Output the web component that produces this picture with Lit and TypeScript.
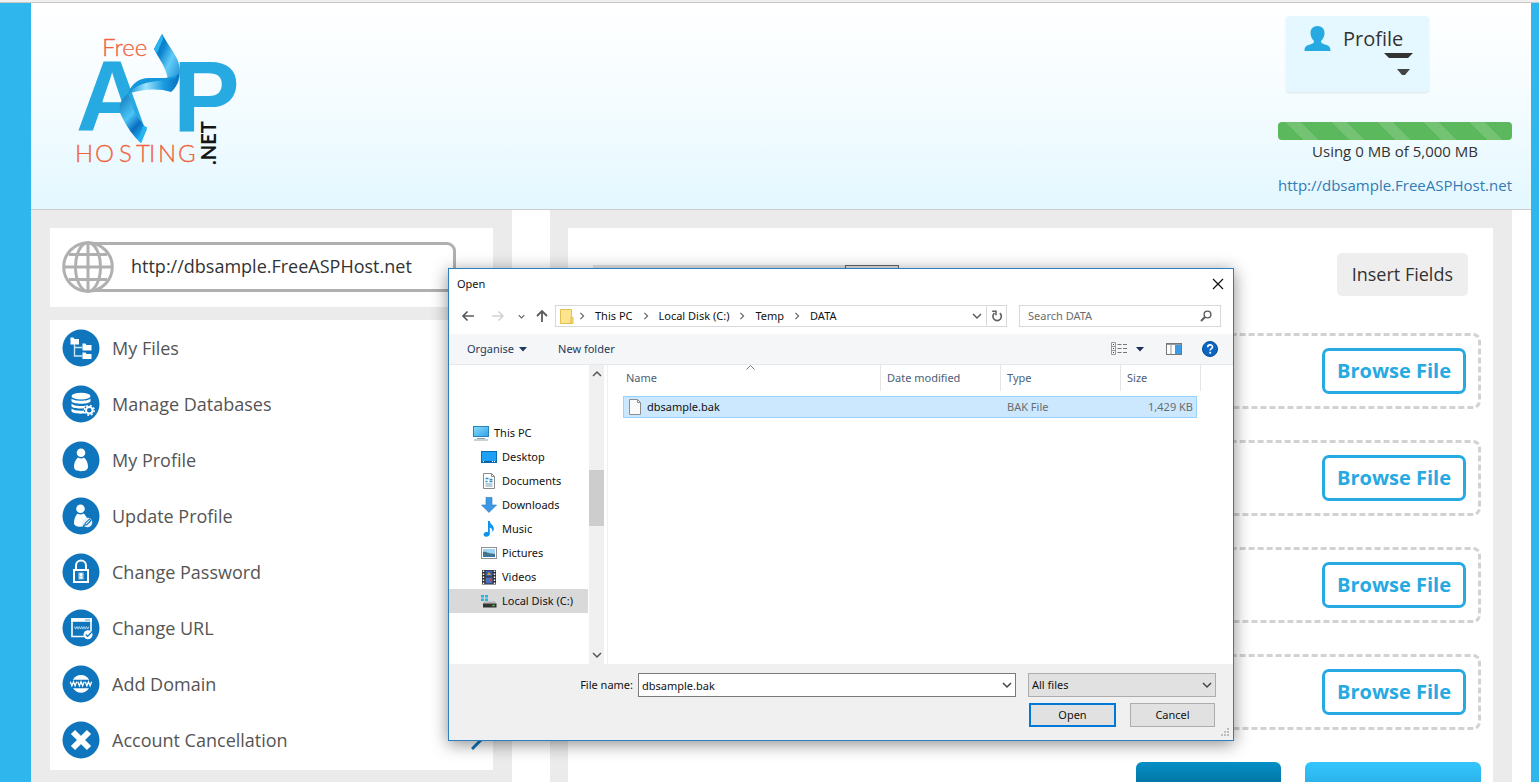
import { LitElement, html, svg, css } from "lit";
import { customElement, state } from "lit/decorators.js";
import { classMap } from "lit/directives/class-map.js";

const disc = (inner: unknown) => html`
  <svg class="disc" viewBox="0 0 38 38" aria-hidden="true">
    <circle cx="19" cy="19" r="18.5" fill="#0f75bc" />
    ${inner}
  </svg>`;

const icons: Record<string, unknown> = {
  files: svg`
    <path d="M8.5 8.5h3l1 1.500h4.500v5.500h-8.500z" fill="#fff"/>
    <path d="M20.500 14.500h3l1 1.500h5v5.500h-9zM20.500 23.500h3l1 1.500h5v5h-9z" fill="#fff"/>
    <path d="M12.500 15v12h8M12.500 18.500h8" fill="none" stroke="#cfe6f6" stroke-width="1.400"/>`,
  database: svg`
    <ellipse cx="19" cy="11.200" rx="9.500" ry="3.400" fill="#fff"/>
    <path d="M9.500 13.500c2 3 17 3 19 0v3c-2 3-17 3-19 0zM9.500 18.500c2 3 13 3.200 17 1.200-2 .6-4 2-4.300 3.500-5 .6-11.500 0-12.700-1.700zM9.500 23.500c2 2 8 2.500 12.300 2 .2 1.300.6 2 1.200 2.800-5 .8-12 .2-13.500-1.800z" fill="#fff"/>
    <circle cx="27.300" cy="25.300" r="3.300" fill="none" stroke="#fff" stroke-width="2"/>
    <circle cx="27.300" cy="25.300" r="4.800" fill="none" stroke="#fff" stroke-width="1.600" stroke-dasharray="1.900 1.870"/>`,
  person: svg`
    <circle cx="19" cy="11.800" r="4.300" fill="#fff"/>
    <path d="M16 16.500c1.500 1.300 4.500 1.300 6 0 2.500 2 4 5.500 4 9 0 3-2 4.700-7 4.700s-7-1.700-7-4.700c0-3.500 1.500-7 4-9z" fill="#fff"/>`,
  edit: svg`
    <circle cx="18.500" cy="11.800" r="4.300" fill="#fff"/>
    <path d="M15.500 16.500c1.500 1.300 4.500 1.300 6 0 1.700 1 2.800 3 3.500 5-2.500.5-4.700 3-4 8.100-5 .6-9-.4-9-3.600 0-4 1.500-7.500 3.500-9.500z" fill="#fff"/>
    <circle cx="25.500" cy="25.500" r="4.800" fill="#e6f2fa"/>
    <path d="M22.700 28.200l.5-2 4.200-4 1.500 1.500-4.200 4z" fill="none" stroke="#0f75bc" stroke-width="1.100"/>`,
  lock: svg`
    <path d="M14 17v-4.500a5 5 0 0 1 10 0V17" fill="none" stroke="#fff" stroke-width="2"/>
    <rect x="12" y="17" width="14" height="12" fill="none" stroke="#fff" stroke-width="2"/>
    <rect x="16.300" y="19.500" width="5.400" height="7" fill="#8fc1e3"/>
    <circle cx="19" cy="21.500" r="1.500" fill="#fff"/><rect x="17.500" y="23.500" width="3" height="2" fill="#fff"/>`,
  url: svg`
    <path d="M29 22V10H10v17.500h12" fill="none" stroke="#fff" stroke-width="1.600"/>
    <path d="M9.200 9.200h20.600v3.600H9.200z" fill="#fff"/><path d="M23 11h5" stroke="#6fb0dd" stroke-width="1.200"/>
    <path d="M12.500 17.500l1.200 2.600 1.200-2.600 1.200 2.600 1.200-2.600M17.300 17.500l1.200 2.600 1.200-2.600 1.200 2.600 1.200-2.600M22.100 17.500l1.200 2.600 1.200-2.600 1.200 2.600 1.200-2.600" fill="none" stroke="#b9daf0" stroke-width=".9"/>
    <circle cx="26" cy="25.800" r="4.500" fill="#fff"/><path d="M23.800 25.500l1.800 1.900 4-4.200" fill="none" stroke="#0f75bc" stroke-width="1.300"/>`,
  domain: svg`
    <path d="M10.800 14.800a9.400 9.400 0 0 1 16.400 0zM11 23.300a9.400 9.400 0 0 0 16 0z" fill="#fff"/>
    <path d="M8.300 16.800l1.600 4 1.600-4 1.600 4 1.600-4M15.800 16.800l1.600 4 1.600-4 1.600 4 1.600-4M23.300 16.800l1.600 4 1.600-4 1.600 4 1.600-4" fill="none" stroke="#fff" stroke-width="1.300"/>`,
  cancel: svg`
    <path d="M11 11l16 16M27 11L11 27" stroke="#fff" stroke-width="6"/>`,
};

const menu = [
  ["files", "My Files"],
  ["database", "Manage Databases"],
  ["person", "My Profile"],
  ["edit", "Update Profile"],
  ["lock", "Change Password"],
  ["url", "Change URL"],
  ["domain", "Add Domain"],
  ["cancel", "Account Cancellation"],
];

const treeIcons: Record<string, unknown> = {
  pc: svg`<defs><linearGradient id="g" x1="0" y1="0" x2="1" y2="1"><stop offset="0" stop-color="#8bdcfb"/><stop offset="1" stop-color="#2fa2ea"/></linearGradient></defs>
    <rect x=".5" y="1.500" width="15" height="10" fill="url(#g)" stroke="#2a83b8"/><path d="M4 13.500h8M1 15h14" stroke="#8aa4b3"/>`,
  desktop: svg`<rect x=".5" y="2.500" width="15" height="11" fill="#1da1f7" stroke="#0a6cb5"/><path d="M1 12.500h14" stroke="#0a5a9c"/><path d="M2 12.500h1M11 12.500h1M13 12.500h1" stroke="#fff"/>`,
  documents: svg`<path d="M2.500.5h8l3 3v12h-11z" fill="#fff" stroke="#8a8a8a"/><path d="M10.500.5v3h3" fill="none" stroke="#8a8a8a"/><path d="M4.500 5.500h3M4.500 8.500h2M8.500 6.500h3M8.500 8.500h3" stroke="#2b90cf" stroke-width="1.500"/><path d="M4.500 11h7M4.500 13h7" stroke="#7b9db5"/>`,
  downloads: svg`<path d="M5 .5h6v7.500h4.500L8 15.500.5 8H5z" fill="#3d97e3" stroke="#2a7cc4" stroke-width=".6"/>`,
  music: svg`<path d="M7 0h1.800c.4 3.500 4.400 4.500 4 8-.1 1.300-.8 2.500-1.500 3 .6-2.800-1-4-2.500-4.500v6.200C8.800 15 6.500 16 4.800 15.700 2.600 15.300 2 13.500 3 12.200 4 11 5.800 10.800 7 11.300z" fill="#0d94ec"/>`,
  pictures: svg`<rect x=".5" y="2.500" width="15" height="11" fill="#fff" stroke="#909090"/><rect x="2" y="4" width="12" height="8" fill="#9fd3f2"/><path d="M2 7c3-1 5 2 12 2v3H2z" fill="#44748a"/><path d="M2 11h12v1H2z" fill="#2f77b5"/>`,
  videos: svg`<rect x="1" y="1" width="14" height="14.500" fill="#2c2c2c"/><path d="M2.500 1.500v14M13.500 1.500v14" stroke="#fff" stroke-width="1.500" stroke-dasharray="1.500 1.500"/><rect x="4.500" y="1.500" width="7" height="6" fill="#3b5fb0"/><rect x="4.500" y="8.500" width="7" height="6" fill="#4c6fc4"/><path d="M6 6l2-3 2 3z" fill="#e0a020"/><path d="M8 12l2-3 1 3z" fill="#d04a3a"/>`,
  disk: svg`<path d="M0 2h3v2.500H0zM4 2h3v2.500H4zM0 5.500h3V8H0zM4 5.500h3V8H4z" fill="#20b6e2"/><path d="M3.500 8.500h10.500l1.500 2H2z" fill="#b5b5b5"/><rect x="2" y="10.500" width="13.500" height="4" fill="#333"/><rect x="11.500" y="11.800" width="2" height="1.400" fill="#55e055"/>`,
};

const places = [
  ["pc", "This PC"],
  ["desktop", "Desktop"],
  ["documents", "Documents"],
  ["downloads", "Downloads"],
  ["music", "Music"],
  ["pictures", "Pictures"],
  ["videos", "Videos"],
  ["disk", "Local Disk (C:)"],
];

const chevron = (cls: string) => html`
  <svg class=${"chev " + cls} viewBox="0 0 10 10" aria-hidden="true"><path d="M1 3l4 4 4-4" fill="none" stroke="currentColor" stroke-width="1.500" /></svg>`;

@customElement("site-logo")
class SiteLogo extends LitElement {
  static styles = css`
    :host { display: block; width: 170px; height: 140px; }
    .art { display: block; width: 100%; height: 100%; }
    .big { font: 700 100px "Liberation Sans", Arial, sans-serif; fill: #27a9e1; }
    .thin { font: 300 24px Lato, sans-serif; fill: #f1633c; stroke: #f1633c; stroke-width: 0.3px; }
    .net { font: 700 20px Lato, sans-serif; fill: #151515; }
  `;
  render() {
    return html`
      <svg class="art" viewBox="70 30 170 140" role="img" aria-label="Free ASP Hosting .NET">
        <defs>
          <linearGradient id="r1" x1="0" y1="0" x2="1" y2="1">
            <stop offset="0" stop-color="#0a72c0" /><stop offset=".3" stop-color="#0b84d0" />
            <stop offset=".55" stop-color="#63cdf8" /><stop offset="1" stop-color="#0a78c6" />
          </linearGradient>
          <linearGradient id="r2" x1="0" y1="0" x2="1" y2="0">
            <stop offset="0" stop-color="#1191d8" /><stop offset=".35" stop-color="#9be4fd" />
            <stop offset=".7" stop-color="#1b9ce0" /><stop offset="1" stop-color="#0870bd" />
          </linearGradient>
          <linearGradient id="r3" x1="0" y1="0" x2=".6" y2="1">
            <stop offset="0" stop-color="#0d74ba" /><stop offset=".5" stop-color="#4cc5f6" />
            <stop offset=".75" stop-color="#0a6dbf" /><stop offset="1" stop-color="#1fb0ee" />
          </linearGradient>
        </defs>
        <text class="thin" x="102" y="56">Free</text>
        <text class="big" x="76" y="131">A</text>
        <text class="big" x="173" y="131">P</text>
        <path d="M162 34l-8 15c5 10 11 16 14 30l3 12c6-4 9-11 9-20 0-11-7-19-12-27z" fill="url(#r1)" />
        <path d="M162 34l-8 15 3 4 6-14z" fill="#2cb4ee" />
        <path d="M128 94c4-12 13-17 24-16 10 0 19 1 27-4-1 8-3 14-8 18-12-4-30-3-43 2z" fill="url(#r2)" />
        <path d="M128 94c4-12 13-17 24-16 10 0 17 1 25-3l-1 3c-16 5-34 0-48 16z" fill="#1497dc" />
        <path d="M128 94c-8 6-11 14-6 23 5 10 11 19 19 26l6-14c-7-8-15-17-15-27z" fill="url(#r3)" />
        <path d="M147 127l-6 16-3-3 5-14z" fill="#28b4ef" />
        <text class="thin" y="162" x="75 95 119 136 149 158 178">HOSTING</text>
        <text class="net" transform="translate(216 165) rotate(-90)">.NET</text>
      </svg>`;
  }
}

@customElement("open-dialog")
class OpenDialog extends LitElement {
  @state() private place = "disk";

  static styles = css`
    :host {
      display: block;
      box-sizing: border-box;
      width: 786px;
      border: 1px solid #2a7fc0;
      background: #fff;
      box-shadow: 0 3px 16px rgba(0, 0, 0, 0.45);
      font: 11px/16px "Noto Sans", "Open Sans", sans-serif;
      color: #111;
    }
    * { box-sizing: border-box; }
    button, input, select { font: inherit; color: inherit; margin: 0; padding: 0; border: 0; background: none; border-radius: 0; outline: none; appearance: none; }
    svg { display: block; flex: none; }
    .title { display: flex; align-items: center; justify-content: space-between; height: 29px; padding: 0 9px 0 8px; }
    .close { width: 12px; height: 12px; }
    .nav { display: flex; align-items: center; height: 36px; padding: 0 12px 0 12px; color: #5c5c5c; }
    .arrows { display: flex; align-items: center; width: 94px; gap: 16px; }
    .arrow { width: 14px; height: 14px; }
    .recent { display: flex; align-items: center; gap: 10px; margin-left: -3px; }
    .faint { color: #d2d2d2; }
    .chev { width: 10px; height: 10px; }
    .small { width: 7px; height: 7px; }
    .side { transform: rotate(-90deg); width: 8px; height: 8px; color: #666; }
    .address { flex: 1; display: flex; align-items: center; height: 22px; border: 1px solid #d9d9d9; padding-left: 4px; }
    .crumbs { flex: 1; display: flex; align-items: center; gap: 9px; color: #111; padding-left: 4px; }
    .reload { display: grid; place-items: center; align-self: stretch; width: 20px; border-left: 1px solid #d9d9d9; margin-left: 4px; }
    .search { display: flex; align-items: center; width: 202px; height: 22px; border: 1px solid #d9d9d9; margin-left: 12px; padding: 0 8px; }
    .search-input { flex: 1; min-width: 0; }
    .search-input::placeholder { color: #6d6d6d; opacity: 1; }
    .tools { display: flex; align-items: center; height: 31px; background: #f5f6f7; border-bottom: 1px solid #e8e8e8; padding: 0 15px 0 18px; color: #1e395b; }
    .organise { display: flex; align-items: center; gap: 5px; margin-right: 31px; }
    .tail { margin-left: auto; display: flex; align-items: center; }
    .views { display: flex; align-items: center; gap: 8px; margin-right: 22px; }
    .preview { margin-right: 20px; }
    .body { display: flex; height: 299px; }
    .tree { width: 140px; padding-top: 56px; display: flex; flex-direction: column; }
    .node { display: flex; align-items: center; height: 24px; gap: 5px; padding-left: 32px; text-align: left; }
    .root { padding-left: 24px; }
    .chosen { background: #d9d9d9; margin-right: 1px; }
    .bar { width: 16px; background: #f0f0f0; display: flex; flex-direction: column; align-items: center; padding: 4px 0; color: #555; border-right: 1px solid #fff; }
    .thumb { width: 15px; height: 56px; background: #cdcdcd; margin: 91px 0 auto; }
    .up { transform: rotate(180deg); }
    .list { flex: 1; border-left: 1px solid #f0f0f0; margin-left: 2px; padding-left: 15px; }
    .grid { border-collapse: separate; border-spacing: 0; table-layout: fixed; width: 578px; }
    .grid th { font-weight: 400; text-align: left; color: #4c607a; height: 26px; border-right: 1px solid #e5e5e5; padding: 0 6px; position: relative; }
    .grid th:first-child { padding-left: 3px; }
    .sort { position: absolute; left: 123px; top: 0; }
    .c-name { width: 258px; }
    .c-mid { width: 120px; }
    .c-size { width: 76px; }
    .c-end { width: 4px; }
    .grid td { height: 22px; padding: 0 6px; color: #6d6d6d; background: #cce8ff; border: solid #99d1ff; border-width: 1px 0; }
    .grid .gap td, .grid .blank { background: none; border: 0; padding: 0; height: 5px; }
    .grid .name { border-left-width: 1px; padding: 0 4px; }
    .grid .size { border-right-width: 1px; text-align: right; padding: 0 3px; white-space: nowrap; }
    .file { display: flex; align-items: center; gap: 5px; color: #111; }
    .foot { background: #f0f0f0; padding: 9px 17px 13px 20px; display: grid; grid-template-columns: 1fr 378px 188px; column-gap: 12px; row-gap: 6px; align-items: center; }
    .label { text-align: right; margin-right: -7px; }
    .combo, .filter { display: flex; align-items: center; height: 24px; border: 1px solid #7a7a7a; background: #fff; padding: 0 3px; }
    .filter { background: #e1e1e1; border-color: #adadad; }
    .combo-input { flex: 1; min-width: 0; height: 22px; }
    .select { flex: 1; height: 22px; }
    .caret { pointer-events: none; color: #444; }
    .actions { grid-column: 3; display: flex; gap: 14px; padding: 0 1px; }
    .btn { flex: 1; height: 24px; background: #e1e1e1; border: 1px solid #adadad; text-align: center; }
    .primary { border: 2px solid #0078d7; }
    .grip { position: absolute; right: 3px; bottom: 3px; }
  `;

  render() {
    return html`
      <div role="dialog" aria-label="Open">
        <div class="title">
          <span>Open</span>
          <button aria-label="Close"><svg class="close" viewBox="0 0 12 12"><path d="M1 1l10 10M11 1L1 11" stroke="#111" stroke-width="1.200" /></svg></button>
        </div>
        <div class="nav">
          <div class="arrows">
            <svg class="arrow" viewBox="0 0 14 14"><path d="M13 7H2M6.500 2.500L2 7l4.500 4.500" fill="none" stroke="currentColor" stroke-width="1.700" /></svg>
            <svg class="arrow faint" viewBox="0 0 14 14"><path d="M1 7h11M7.500 2.500L12 7l-4.500 4.500" fill="none" stroke="currentColor" stroke-width="1.500" /></svg>
            <div class="recent">
              ${chevron("small")}
              <svg class="arrow" viewBox="0 0 14 14"><path d="M7 13V2M2 7l5-5 5 5" fill="none" stroke="currentColor" stroke-width="1.800" /></svg>
            </div>
          </div>
          <div class="address">
            <svg width="14" height="17" viewBox="0 0 14 17"><path d="M.5 1.500h11v8h1.500v6H.5z" fill="#ffe48f" stroke="#e3bf4e" /><path d="M11 9.500v5.500" stroke="#d9b13a" /></svg>
            <nav class="crumbs">
              ${["This PC", "Local Disk (C:)", "Temp", "DATA"].map((c) => html`${chevron("side")}<span>${c}</span>`)}
            </nav>
            ${chevron("")}
            <button class="reload" aria-label="Refresh"><svg width="12" height="12" viewBox="0 0 12 12"><path d="M8.800 3.200a4.200 4.200 0 1 1-5.300 0" fill="none" stroke="currentColor" stroke-width="1.600" /><path d="M1.200 1.300h3.800v3.900" fill="none" stroke="currentColor" stroke-width="1.500" /></svg></button>
          </div>
          <label class="search">
            <input class="search-input" type="text" placeholder="Search DATA" aria-label="Search DATA" />
            <svg width="12" height="12" viewBox="0 0 12 12"><circle cx="7.500" cy="4.500" r="3.400" fill="none" stroke="currentColor" stroke-width="1.400" /><path d="M5 7L1 11" stroke="currentColor" stroke-width="2" /></svg>
          </label>
        </div>
        <div class="tools">
          <button class="organise">Organise <svg width="8" height="5" viewBox="0 0 8 5"><path d="M0 0h8L4 4.500z" fill="#1e395b" /></svg></button>
          <button>New folder</button>
          <div class="tail">
            <button class="views" aria-label="Change your view">
              <svg width="17" height="14" viewBox="0 0 17 14"><path d="M.5.5h4v12h-4zM.5 4.500h4M.5 8.500h4" fill="none" stroke="#999" /><path d="M2 2.500h1M2 6.500h1M2 10.500h1" stroke="#445" /><path d="M6.500 2.500h4M12 2.500h4M6.500 6.500h4M12 6.500h4M6.500 10.500h4M12 10.500h4" stroke="#777" /></svg>
              <svg width="8" height="5" viewBox="0 0 8 5"><path d="M0 0h8L4 4.500z" fill="#1e2f5b" /></svg>
            </button>
            <button class="preview" aria-label="Preview pane"><svg width="16" height="12" viewBox="0 0 16 12"><rect x=".5" y=".5" width="15" height="11" fill="#fff" stroke="#777" /><path d="M1 1.500h14M5 2v9" stroke="#999" /><rect x="9" y="2" width="6" height="9" fill="#3a9be6" /></svg></button>
            <button aria-label="Help"><svg width="16" height="16" viewBox="0 0 16 16"><circle cx="8" cy="8" r="7.500" fill="#0a66c2" stroke="#064b94" /><path d="M5.700 6.200c0-3 4.800-3 4.800-.3 0 1.800-2.300 1.800-2.300 3.600" fill="none" stroke="#fff" stroke-width="1.600" /><rect x="7.300" y="10.800" width="1.800" height="1.800" fill="#fff" /></svg></button>
          </div>
        </div>
        <div class="body">
          <div class="tree">
            ${places.map(([id, name]) => html`
              <button class=${classMap({ node: true, root: id === "pc", chosen: id === this.place })} @click=${() => (this.place = id)}>
                <svg width="16" height="16" viewBox="0 0 16 16" aria-hidden="true">${treeIcons[id]}</svg>${name}
              </button>`)}
          </div>
          <div class="bar">${chevron("up")}<div class="thumb"></div>${chevron("")}</div>
          <div class="list">
            <table class="grid">
              <colgroup><col class="c-name" /><col class="c-mid" /><col class="c-mid" /><col class="c-size" /><col class="c-end" /></colgroup>
              <thead><tr>
                <th>Name<svg class="sort" width="9" height="5" viewBox="0 0 9 5"><path d="M.5 4.500l4-4 4 4" fill="none" stroke="#777" /></svg></th>
                <th>Date modified</th><th>Type</th><th colspan="2">Size</th>
              </tr></thead>
              <tbody>
                <tr class="gap"><td colspan="5"></td></tr>
                <tr>
                  <td class="name"><span class="file"><svg width="14" height="16" viewBox="0 0 14 16"><path d="M1.500.5h8l3 3v12h-11z" fill="#fafafa" stroke="#8d8d8d" /><path d="M9.500.5v3h3" fill="none" stroke="#8d8d8d" /></svg>dbsample.bak</span></td>
                  <td></td><td>BAK File</td><td class="size">1,429 KB</td><td class="blank"></td>
                </tr>
              </tbody>
            </table>
          </div>
        </div>
        <div class="foot">
          <label class="label" for="fname">File name:</label>
          <div class="combo"><input id="fname" class="combo-input" type="text" .value=${"dbsample.bak"} />${chevron("caret")}</div>
          <div class="filter"><select class="select" aria-label="File type"><option>All files</option></select>${chevron("caret")}</div>
          <div class="actions"><button class="btn primary">Open</button><button class="btn">Cancel</button></div>
        </div>
        <svg class="grip" width="9" height="9" viewBox="0 0 9 9"><path d="M6 0h2v2H6zM3 3h2v2H3zM6 3h2v2H6zM0 6h2v2H0zM3 6h2v2H3zM6 6h2v2H6z" fill="#bdbdbd" /></svg>
      </div>`;
  }
}

@customElement("app-root")
class AppRoot extends LitElement {
  static styles = css`
    :host {
      display: block;
      position: relative;
      height: 100vh;
      overflow: hidden;
      background: #2eb6ed;
      font: 18px/26px "Open Sans", sans-serif;
      color: #333;
    }
    * { box-sizing: border-box; }
    button, input { font: inherit; color: inherit; margin: 0; }
    a { text-decoration: none; color: inherit; }
    .strip { height: 3px; background: #f0f0f0; border-bottom: 1px solid #c8c8c8; }
    .page { margin: 0 8px 0 31px; background: #fff; min-height: 100%; }
    .header { display: flex; justify-content: space-between; height: 207px; border-bottom: 1px solid #ccc; background: linear-gradient(#fff, #f4fcff 50%, #e3f8ff); background-clip: padding-box; padding: 13px 19px 0 39px; }
    .logo { margin-top: 14px; }
    .account { display: flex; flex-direction: column; align-items: stretch; width: 234px; font-size: 15px; line-height: 22px; }
    .profile { align-self: flex-start; margin-left: 8px; width: 143px; height: 76px; border: 0; border-radius: 4px; background: #e6f8ff; box-shadow: 0 1px 2px rgba(0, 0, 0, 0.1); font-size: 20px; line-height: 24px; display: flex; flex-direction: column; padding: 9px 16px 0 18px; }
    .who { display: flex; align-items: center; gap: 12px; }
    .bars { align-self: flex-end; display: block; }
    .meter { height: 18px; margin-top: 30px; border-radius: 4px; background: #5cb85c linear-gradient(45deg, transparent 8%, rgba(255, 255, 255, 0.15) 8%, rgba(255, 255, 255, 0.15) 24%, transparent 24%, transparent 58%, rgba(255, 255, 255, 0.15) 58%, rgba(255, 255, 255, 0.15) 74%, transparent 74%) 0 0 / 46px 46px; }
    .usage { text-align: center; }
    .site { color: #337ab7; margin-top: 12px; white-space: nowrap; }
    .columns { display: grid; grid-template-columns: 1fr 2fr; gap: 38px; padding-right: 19px; }
    .side, .main { background: #ebebeb; padding: 18px 19px; min-height: 580px; }
    .main { padding: 18px 19px 0 18px; }
    .card { background: #fff; margin-bottom: 13px; }
    .address { display: flex; align-items: center; padding: 12px 37px 14px 12px; height: 79px; }
    .globe { flex: none; width: 52px; height: 54px; position: relative; }
    .url { flex: 1; min-width: 0; height: 50px; margin-left: -26px; border: 3px solid #b0b0b0; border-left: 0; border-radius: 0 9px 9px 0; padding: 0 0 2px 43px; background: none; outline: none; }
    .menu { padding: 0 10px 2px 12px; }
    .item { display: flex; align-items: center; gap: 12px; height: 56px; color: #555; }
    .item-go { margin-left: auto; }
    .disc { width: 38px; height: 38px; flex: none; }
    .panel { background: #fff; min-height: 560px; padding: 25px 12px 0 25px; }
    .top { display: flex; align-items: flex-start; margin-bottom: 37px; padding-right: 13px; }
    .slab { width: 252px; height: 31px; margin-top: 12px; background: #e4e4e4; }
    .toggle { width: 54px; height: 31px; margin-top: 12px; border: 1px solid #666; background: #e4e4e4; }
    .insert { margin-left: auto; border: 0; border-radius: 5px; background: #eee; padding: 8px 15px 9px; }
    .drop { display: flex; justify-content: flex-end; border: 3px dashed #d2d2d2; border-radius: 8px; padding: 12px; height: 76px; margin-bottom: 31px; }
    .browse { width: 144px; height: 46px; border: 3px solid #27a9e1; border-radius: 7px; background: #fff; color: #27a9e1; font-size: 20px; font-weight: 700; padding: 0; }
    .send { display: flex; justify-content: flex-end; gap: 24px; margin-top: 32px; }
    .big { border: 0; border-radius: 6px; color: #fff; font-size: 20px; line-height: 28px; font-weight: 700; padding: 14px 17px; }
    .all { background: linear-gradient(#058fc6, #015f87 40px); padding-right: 27px; }
    .stop { background: linear-gradient(#35c6ff, #1b8fc6); }
    .dialog { position: absolute; left: 448px; top: 268px; }
  `;

  render() {
    return html`
      <div class="strip"></div>
      <div class="page">
        <header class="header">
          <site-logo class="logo"></site-logo>
          <div class="account">
            <button class="profile">
              <span class="who">
                <svg width="27" height="27" viewBox="0 0 27 27"><path d="M13.500 1c4.500 0 7 3 7 7 0 3.500-1.500 6-3.500 8 0 2 1 2.500 4 3.500 3.500 1 5.500 2 5.500 6.500H.5c0-4.500 2-5.500 5.500-6.500 3-1 4-1.500 4-3.500-2-2-3.500-4.500-3.500-8 0-4 2.500-7 7-7z" fill="#27a9e1" /></svg>
                Profile
              </span>
              <svg class="bars" width="29" height="24" viewBox="0 0 29 24"><path d="M0 1h29l-5 5H5z" fill="#333" /><path d="M13 17h13l-5 6h-3z" fill="#444" /></svg>
            </button>
            <div class="meter" role="progressbar" aria-label="Disk usage"></div>
            <div class="usage">Using 0 MB of 5,000 MB</div>
            <a class="site" href="#">http://dbsample.FreeASPHost.net</a>
          </div>
        </header>
        <div class="columns">
          <aside class="side">
            <div class="card address">
              <svg class="globe" viewBox="0 0 52 54"><g fill="#fff" stroke="#b0b0b0" stroke-width="3"><circle cx="26" cy="27" r="24.300" /><ellipse cx="26" cy="27" rx="12.500" ry="24.300" /><path d="M26 3v48M2 27h48M7 14.500h38M7 39.500h38" /></g></svg>
              <input class="url" type="text" readonly aria-label="Site address" .value=${"http://dbsample.FreeASPHost.net"} />
            </div>
            <nav class="card menu">
              ${menu.map(([id, label]) => html`
                <a class="item" href="#">${disc(icons[id])}<span>${label}</span>
                  <svg class="item-go" width="12" height="20" viewBox="0 0 12 20"><path d="M1 1l9 9-9 9" fill="none" stroke="#0f75bc" stroke-width="3" /></svg>
                </a>`)}
            </nav>
          </aside>
          <main class="main">
            <div class="panel">
              <div class="top">
                <div class="slab"></div><div class="toggle"></div>
                <button class="insert">Insert Fields</button>
              </div>
              ${[1, 2, 3, 4].map(() => html`<div class="drop"><button class="browse">Browse File</button></div>`)}
              <div class="send">
                <button class="big all">Upload all</button>
                <button class="big stop">Cancel Upload</button>
              </div>
            </div>
          </main>
        </div>
      </div>
      <open-dialog class="dialog"></open-dialog>`;
  }
}
